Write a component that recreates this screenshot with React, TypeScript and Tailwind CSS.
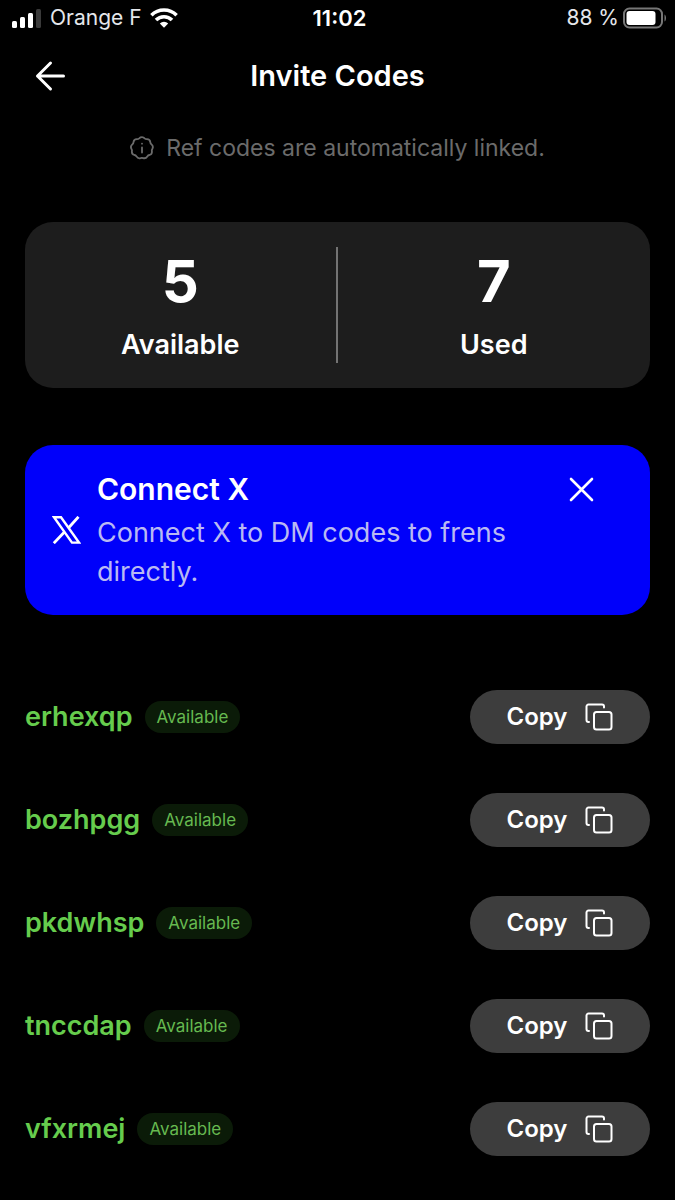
const codes = ["erhexqp", "bozhpgg", "pkdwhsp", "tnccdap", "vfxrmej"];

const stats = [
  { value: 5, label: "Available" },
  { value: 7, label: "Used" },
];

function StatusBar() {
  return (
    <div className="grid h-9 grid-cols-3 items-center pl-3 pr-2 text-[21px] leading-7">
      <div className="flex items-center gap-2">
        <svg width="30" height="19" viewBox="0 0 30 19" fill="#fff" aria-hidden="true">
          <rect x="0" y="12" width="5" height="7" rx="1.5" />
          <rect x="8" y="8" width="5" height="11" rx="1.5" />
          <rect x="16" y="4" width="5" height="15" rx="1.5" />
          <rect x="24" y="0" width="5" height="19" rx="1.5" fill="#3a3a3a" />
        </svg>
        <span className="whitespace-nowrap text-gray-200">Orange F</span>
        <svg width="28" height="20" viewBox="0 0 28 20" aria-hidden="true">
          <g fill="none" stroke="#fff" strokeWidth="3.6">
            <path d="M1.4 7.2a18 18 0 0 1 25.2 0" />
            <path d="M6 12a11.4 11.4 0 0 1 16 0" />
          </g>
          <path d="M9.8 15.4a6 6 0 0 1 8.4 0L14 19.8z" fill="#fff" />
        </svg>
      </div>
      <div className="text-center text-[22px] font-semibold">11:02</div>
      <div className="flex items-center justify-end gap-1">
        <span className="whitespace-nowrap text-gray-200">88 %</span>
        <svg width="44" height="22" viewBox="0 0 44 22" aria-hidden="true">
          <rect x="1" y="1.5" width="38" height="19" rx="5.5" fill="none" stroke="#777" strokeWidth="2" />
          <rect x="3.5" y="4" width="29" height="14" rx="3" fill="#fff" />
          <path d="M41.5 7.5c2 1 2 6 0 7z" fill="#777" />
        </svg>
      </div>
    </div>
  );
}

function CopyIcon() {
  return (
    <svg width="28" height="28" viewBox="0 0 28 28" fill="none" stroke="#fff" strokeWidth="2" strokeLinecap="round" aria-hidden="true">
      <rect x="9" y="9" width="17.5" height="17.5" rx="2.5" />
      <path d="M4 19H3.500A2 2 0 0 1 1.500 17V3.500A2 2 0 0 1 3.500 1.500H17A2 2 0 0 1 19 3.500V4.500" />
    </svg>
  );
}

function CodeRow({ code }: { code: string }) {
  return (
    <li className="flex items-center justify-between">
      <div className="flex items-center gap-3">
        <span className="text-[27px] font-semibold leading-8 text-[#66cc4d]">{code}</span>
        <span className="rounded-full bg-[#0b1b08] px-3 py-1 text-[17px] leading-6 text-[#66b950]">
          Available
        </span>
      </div>
      <button
        type="button"
        className="flex h-[54px] w-[180px] items-center justify-center gap-[18px] rounded-full bg-[#3d3d3d] text-2xl font-semibold"
      >
        Copy
        <CopyIcon />
      </button>
    </li>
  );
}

export default function App() {
  return (
    <div className="min-h-screen bg-black pb-11 font-['Inter',sans-serif] text-white">
      <StatusBar />

      <header className="grid h-20 grid-cols-[1fr_auto_1fr] items-center px-[34px]">
        <button type="button" aria-label="Back" className="justify-self-start">
          <svg width="32" height="32" viewBox="0 0 32 32" fill="none" stroke="#fff" strokeWidth="3" strokeLinecap="round" strokeLinejoin="round" aria-hidden="true">
            <path d="M29.5 16H3.5M16.5 3 3.5 16l13 13" />
          </svg>
        </button>
        <h1 className="text-[29px] font-semibold leading-8">Invite Codes</h1>
      </header>

      <p className="mt-4 flex items-center justify-center gap-3 text-[23px] leading-8 text-[#6b6b6b]">
        <svg width="24" height="24" viewBox="0 0 24 24" fill="none" stroke="currentColor" strokeWidth="1.8" strokeLinecap="round" strokeLinejoin="round" aria-hidden="true">
          <path d="M12 1.2q1.6 0 2.6 1.2 1 .9 2.4.8 2.9.1 3.3 2.9.1 1.4 1.2 2.3 2.2 1.9.9 4.300-.8 1.2-.5 2.6.4 2.9-2.4 3.700-1.4.2-2.2 1.4-1.5 2.4-4.1 1.7-1.3-.5-2.6 0-2.7.8-4.100-1.700-.8-1.2-2.2-1.4-2.7-.8-2.400-3.700.3-1.4-.5-2.6-1.300-2.400.9-4.300 1.100-.9 1.200-2.300.4-2.800 3.300-2.900 1.400.1 2.400-.8Q10.400 1.200 12 1.200z" />
          <path d="M12 11.5v5M12 7.6v.1" />
        </svg>
        Ref codes are automatically linked.
      </p>

      <main className="px-[25px]">
        <section className="mt-[58px] grid grid-cols-2 divide-x-2 divide-[#737373] rounded-[28px] bg-[#1d1d1d] py-[25px]">
          {stats.map((stat) => (
            <div key={stat.label} className="flex flex-col items-center pb-0.5 pt-2">
              <span className="text-[58px] font-bold leading-[52px]">{stat.value}</span>
              <span className="mt-[22px] text-[27px] font-semibold leading-8">{stat.label}</span>
            </div>
          ))}
        </section>

        <section className="mt-[57px] flex items-center gap-4 rounded-[28px] bg-[#0000fa] py-6 pl-[27px] pr-[55px]">
          <svg width="29" height="28" viewBox="0 0 29 28" className="shrink-0" aria-hidden="true">
            <path d="M2 1.2H9L27 26.6H20z" fill="none" stroke="#fff" strokeWidth="2.4" />
            <path d="M26.5.8 16.2 12.2M12.2 16.3 1.8 27.2" fill="none" stroke="#fff" strokeWidth="2.8" />
          </svg>
          <div className="flex-1">
            <div className="flex items-center justify-between">
              <h2 className="text-[30px] font-semibold leading-10">Connect X</h2>
              <button type="button" aria-label="Dismiss">
                <svg width="28" height="28" viewBox="0 0 28 28" fill="none" stroke="#fff" strokeWidth="2.6" strokeLinecap="round" aria-hidden="true">
                  <path d="m4 4 21 21M25 4 4 25" />
                </svg>
              </button>
            </div>
            <p className="mt-1 max-w-[440px] text-[27px] leading-[39px] text-[#b9b9f2]">
              Connect X to DM codes to frens directly.
            </p>
          </div>
        </section>

        <ul className="mt-[75px] flex flex-col gap-[49px]">
          {codes.map((code) => (
            <CodeRow key={code} code={code} />
          ))}
        </ul>
      </main>
    </div>
  );
}
